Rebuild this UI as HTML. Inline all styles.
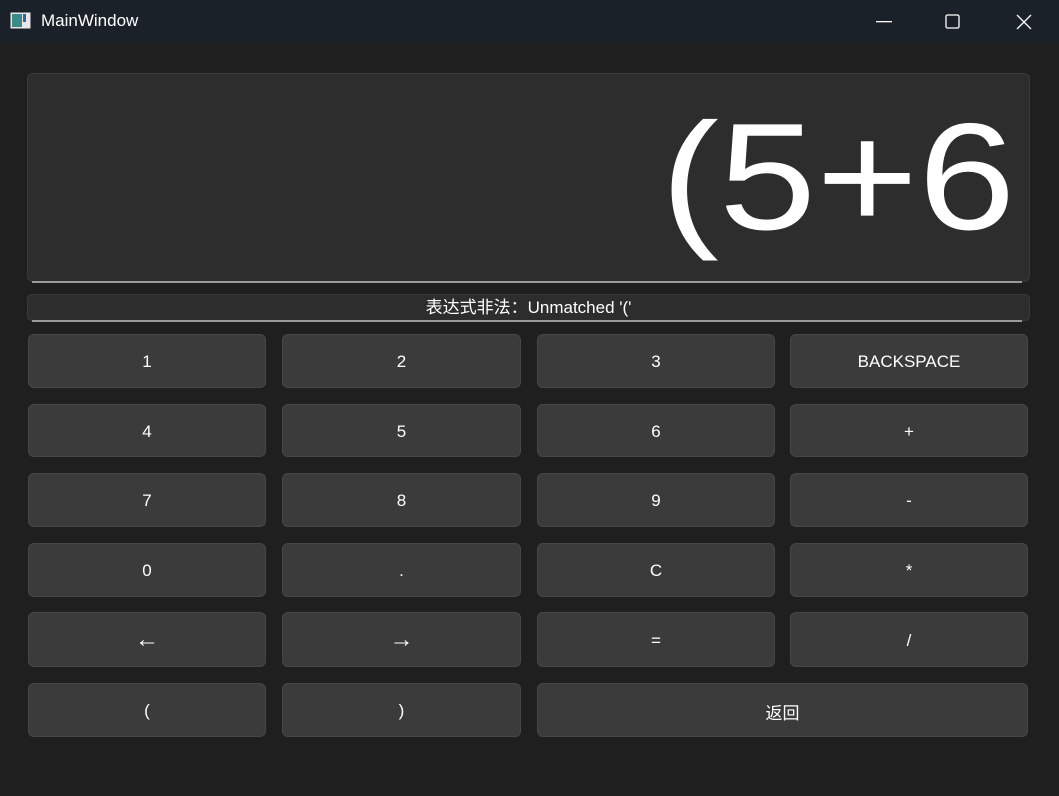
<!DOCTYPE html>
<html><head><meta charset="utf-8"><style>
*{margin:0;padding:0;box-sizing:border-box}
body{width:1059px;height:796px;background:#1f1f1f;position:relative;overflow:hidden;font-family:"Liberation Sans","Noto Sans CJK SC",sans-serif;color:#fff}
.tb{position:absolute;left:0;top:0;width:1059px;height:43px;background:#1b2129}
.title{position:absolute;left:41px;top:11px;font-size:17px;color:#fff}
.disp{position:absolute;left:27px;top:73px;width:1003px;height:209px;background:#2d2d2d;border:1px solid #3a3a3a;border-radius:6px;overflow:hidden}
.disp span{position:absolute;right:14px;top:27px;font-size:152px;line-height:1;color:#fff;white-space:nowrap;transform:scaleX(1.15);transform-origin:right center}
.line{position:absolute;height:2px;background:#9a9a9a}
.stat{position:absolute;left:27px;top:294px;width:1003px;height:27px;background:#2d2d2d;border:1px solid #3a3a3a;border-radius:5px;text-align:center;font-size:17px;line-height:25px}
.b{position:absolute;background:#3b3b3b;border:1px solid #474747;border-radius:6px;display:flex;align-items:center;justify-content:center;font-size:17px;color:#fff;padding-top:2px}
.a{font-size:24px;padding-top:0}
</style></head><body>
<div class="tb">
<svg style="position:absolute;left:10px;top:12px" width="21" height="18"><rect x="0.5" y="0.5" width="20" height="16" fill="#e8e8e8"/><rect x="2" y="2" width="10" height="13" fill="#3a8a8a"/><rect x="13" y="2" width="3" height="8" fill="#2e6a8a"/></svg>
<div class="title">MainWindow</div>
<svg style="position:absolute;left:876px;top:21px" width="16" height="2"><rect width="16" height="1.3" fill="#fff"/></svg>
<svg style="position:absolute;left:945px;top:14px" width="16" height="16"><rect x="1" y="1" width="13" height="13" rx="1.5" fill="none" stroke="#fff" stroke-width="1.3"/></svg>
<svg style="position:absolute;left:1016px;top:14px" width="16" height="16"><path d="M1 1L15 15M15 1L1 15" stroke="#fff" stroke-width="1.3"/></svg>
</div>
<div class="disp"><span>(5+6</span></div>
<div class="line" style="left:32px;top:281px;width:990px"></div>
<div class="stat">表达式非法：Unmatched '('</div>
<div class="line" style="left:32px;top:320px;width:990px"></div>
<div class="b" style="left:28px;top:334px;width:238px;height:54px">1</div>
<div class="b" style="left:282px;top:334px;width:239px;height:54px">2</div>
<div class="b" style="left:537px;top:334px;width:238px;height:54px">3</div>
<div class="b" style="left:790px;top:334px;width:238px;height:54px">BACKSPACE</div>
<div class="b" style="left:28px;top:404px;width:238px;height:53px">4</div>
<div class="b" style="left:282px;top:404px;width:239px;height:53px">5</div>
<div class="b" style="left:537px;top:404px;width:238px;height:53px">6</div>
<div class="b" style="left:790px;top:404px;width:238px;height:53px">+</div>
<div class="b" style="left:28px;top:473px;width:238px;height:54px">7</div>
<div class="b" style="left:282px;top:473px;width:239px;height:54px">8</div>
<div class="b" style="left:537px;top:473px;width:238px;height:54px">9</div>
<div class="b" style="left:790px;top:473px;width:238px;height:54px">-</div>
<div class="b" style="left:28px;top:543px;width:238px;height:54px">0</div>
<div class="b" style="left:282px;top:543px;width:239px;height:54px">.</div>
<div class="b" style="left:537px;top:543px;width:238px;height:54px">C</div>
<div class="b" style="left:790px;top:543px;width:238px;height:54px">*</div>
<div class="b a" style="left:28px;top:612px;width:238px;height:55px">←</div>
<div class="b a" style="left:282px;top:612px;width:239px;height:55px">→</div>
<div class="b" style="left:537px;top:612px;width:238px;height:55px">=</div>
<div class="b" style="left:790px;top:612px;width:238px;height:55px">/</div>
<div class="b" style="left:28px;top:683px;width:238px;height:54px">(</div>
<div class="b" style="left:282px;top:683px;width:239px;height:54px">)</div>
<div class="b" style="left:537px;top:683px;width:491px;height:54px">返回</div>
</body></html>
